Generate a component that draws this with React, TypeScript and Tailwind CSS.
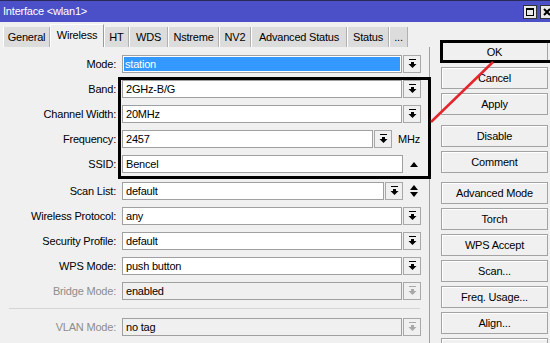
import React from "react";

type Kind = "dd" | "freq" | "spin" | "scan";

interface RowDef {
  label: string;
  value: string;
  kind: Kind;
  disabled?: boolean;
  selected?: boolean;
}

const topRows: RowDef[] = [
  { label: "Mode:", value: "station", kind: "dd", selected: true },
  { label: "Band:", value: "2GHz-B/G", kind: "dd" },
  { label: "Channel Width:", value: "20MHz", kind: "dd" },
  { label: "Frequency:", value: "2457", kind: "freq" },
  { label: "SSID:", value: "Bencel", kind: "spin" },
];

const midRows: RowDef[] = [
  { label: "Scan List:", value: "default", kind: "scan" },
  { label: "Wireless Protocol:", value: "any", kind: "dd" },
  { label: "Security Profile:", value: "default", kind: "dd" },
  { label: "WPS Mode:", value: "push button", kind: "dd" },
  { label: "Bridge Mode:", value: "enabled", kind: "dd", disabled: true },
];

const tabs = [
  { name: "General", w: "w-[47px]" },
  { name: "Wireless", w: "w-[54px]", active: true },
  { name: "HT", w: "w-[25px]" },
  { name: "WDS", w: "w-[39px]" },
  { name: "Nstreme", w: "w-[51px]" },
  { name: "NV2", w: "w-[32px]" },
  { name: "Advanced Status", w: "w-[96px]" },
  { name: "Status", w: "w-[42px]" },
  { name: "...", w: "w-[19px]" },
];

function DropGlyph({ gray }: { gray?: boolean }) {
  const c = gray ? "#a8a8a8" : "#000";
  return (
    <svg width="9" height="10" viewBox="0 0 9 10">
      <rect x="1" y="0" width="7" height="1" fill={c} />
      <rect x="3" y="3" width="3" height="2" fill={c} />
      <polygon points="0.5,5 8.5,5 4.5,9" fill={c} />
    </svg>
  );
}

function DDBtn({ gray }: { gray?: boolean }) {
  return (
    <div className="w-[18px] h-[18px] shrink-0 border border-[#a8a8a8] bg-[#f0f0f0] flex items-center justify-center">
      <DropGlyph gray={gray} />
    </div>
  );
}

function Field({ row, width }: { row: RowDef; width: string }) {
  return (
    <div
      className={`${width} h-[18px] shrink-0 border border-[#a0a0a0] ${
        row.disabled ? "bg-[#f0f0f0]" : "bg-white"
      } flex items-center p-[1px]`}
    >
      {row.selected ? (
        <span className="h-full flex-1 bg-[#3399ff] text-white flex items-center pl-[1px]">{row.value}</span>
      ) : (
        <span className="pl-[2px]">{row.value}</span>
      )}
    </div>
  );
}

function Row({ row }: { row: RowDef }) {
  return (
    <div className="flex items-center h-[18px]">
      <div className={`w-[117px] shrink-0 text-right pr-[1px] ${row.disabled ? "text-[#8d8d8d]" : "text-black"}`}>
        {row.label}
      </div>
      <div className="ml-[5px] flex items-center gap-[1px]">
        {row.kind === "dd" && (
          <>
            <Field row={row} width="w-[280px]" />
            <DDBtn gray={row.disabled} />
          </>
        )}
        {row.kind === "freq" && (
          <>
            <Field row={row} width="w-[251px]" />
            <DDBtn />
            <span className="ml-[5px]">MHz</span>
          </>
        )}
        {row.kind === "spin" && (
          <>
            <Field row={row} width="w-[281px]" />
            <svg width="8" height="5" viewBox="0 0 8 5" className="ml-[6px]">
              <polygon points="0,5 8,5 4,0" fill="#000" />
            </svg>
          </>
        )}
        {row.kind === "scan" && (
          <>
            <Field row={row} width="w-[262px]" />
            <DDBtn />
            <svg width="8" height="12" viewBox="0 0 8 12" className="ml-[6px]">
              <polygon points="0,5 8,5 4,0" fill="#000" />
              <polygon points="0,7 8,7 4,12" fill="#000" />
            </svg>
          </>
        )}
      </div>
    </div>
  );
}

function Btn({ label, className = "" }: { label: string; className?: string }) {
  return (
    <div
      className={`h-[22px] w-[107px] shrink-0 border border-[#a3a3a3] bg-[#f0f0f0] shadow-[inset_1px_1px_0_#fff] flex items-center justify-center ${className}`}
    >
      {label}
    </div>
  );
}

export default function App() {
  return (
    <div className="relative w-[550px] h-[343px] overflow-hidden bg-[#f0f0f0] text-[11px] leading-none tracking-[-0.2px] text-black font-['Liberation_Sans',Arial,sans-serif]">
      {/* Title bar */}
      <div className="h-[22px] bg-[#4b4fc8] border-t border-[#2a2a5a] flex items-center text-white text-[11px]">
        <span className="pl-[3px]">Interface &lt;wlan1&gt;</span>
        <div className="ml-auto mr-[-4px] flex items-center gap-[3px]">
          <div className="w-[14px] h-[14px] bg-[#e8e8e8] border border-[#333] flex items-center justify-center">
            <div className="w-[8px] h-[8px] border border-black border-t-2" />
          </div>
          <div className="w-[14px] h-[14px] bg-[#e8e8e8] border border-[#333] flex items-center justify-center">
            <svg width="8" height="8" viewBox="0 0 8 8">
              <path d="M1 1L7 7M7 1L1 7" stroke="#000" strokeWidth="2" />
            </svg>
          </div>
        </div>
      </div>

      <div className="flex">
        {/* Left: tabs + form */}
        <div className="w-[430px] shrink-0">
          <div className="h-[25px] flex items-end pl-[3px]">
            {tabs.map((t) =>
              t.active ? (
                <div
                  key={t.name}
                  className={`${t.w} h-[23px] bg-[#f0f0f0] border-l border-t border-white border-r border-r-[#9a9a9a] flex items-start justify-center pt-[5px]`}
                >
                  {t.name}
                </div>
              ) : (
                <div
                  key={t.name}
                  className={`${t.w} h-[20px] bg-[#dcdcdc] border-l border-white border-r border-r-[#b0b0b0] flex items-center justify-center`}
                >
                  {t.name}
                </div>
              )
            )}
          </div>
          <div className="h-[296px] border-r border-[#a0a0a0] pt-[8px]">
            <div className="flex flex-col gap-[7px]">
              {topRows.map((r) => (
                <Row key={r.label} row={r} />
              ))}
            </div>
            <div className="flex flex-col gap-[7px] mt-[9px]">
              {midRows.map((r) => (
                <Row key={r.label} row={r} />
              ))}
            </div>
            <div className="mt-[8px] ml-[9px] w-[411px] h-[1px] bg-[#d4d4d4]" />
            <div className="flex flex-col gap-[7px] mt-[9px]">
              <Row row={{ label: "VLAN Mode:", value: "no tag", kind: "dd", disabled: true }} />
              <Row row={{ label: "", value: "", kind: "dd", disabled: true }} />
            </div>
          </div>
        </div>

        {/* Right: buttons */}
        <div className="flex flex-col pl-[11px] pt-[19px]">
          <div className="flex flex-col gap-[4px]">
            <Btn label="OK" />
            <Btn label="Cancel" />
            <Btn label="Apply" />
          </div>
          <div className="flex flex-col gap-[4px] mt-[10px]">
            <Btn label="Disable" />
            <Btn label="Comment" />
          </div>
          <div className="flex flex-col gap-[4px] mt-[9px]">
            <Btn label="Advanced Mode" />
            <Btn label="Torch" />
            <Btn label="WPS Accept" />
            <Btn label="Scan..." />
            <Btn label="Freq. Usage..." />
            <Btn label="Align..." />
            <Btn label="" />
          </div>
        </div>
      </div>

      {/* Annotations */}
      <div className="absolute left-[118px] top-[77px] w-[313px] h-[102px] border-[3px] border-black" />
      <div className="absolute left-[440px] top-[40px] w-[120px] h-[23px] border-[3px] border-black" />
      <svg className="absolute left-0 top-0" width="550" height="343" viewBox="0 0 550 343">
        <line x1="431" y1="122" x2="493" y2="62" stroke="#e3262d" strokeWidth="2.5" />
      </svg>
    </div>
  );
}
